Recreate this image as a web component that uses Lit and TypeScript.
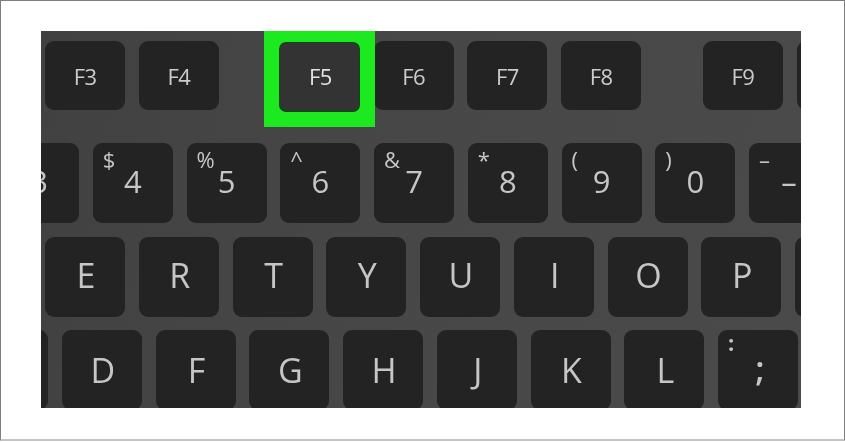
import { LitElement, html, css } from "lit";
import { customElement } from "lit/decorators.js";

type K = { t?: string; s?: string; cls?: string };

const fnRow: K[] = [
  { t: "F3" }, { t: "F4" }, { t: "F5", cls: "hl" }, { t: "F6" }, { t: "F7" }, { t: "F8" }, { t: "F9", cls: "far" }, { t: "" },
];
const numRow: K[] = [
  { t: "3" }, { t: "4", s: "$" }, { t: "5", s: "%" }, { t: "6", s: "^" }, { t: "7", s: "&" },
  { t: "8", s: "*" }, { t: "9", s: "(" }, { t: "0", s: ")" }, { t: "–", s: "–" },
];
const qRow: K[] = ["E", "R", "T", "Y", "U", "I", "O", "P", ""].map((t) => ({ t }));
const aRow: K[] = [
  ...["", "D", "F", "G", "H", "J", "K", "L"].map((t) => ({ t })),
  { t: ";", s: ":", cls: "semi" },
];

@customElement("app-root")
export class AppRoot extends LitElement {
  static styles = css`
    :host {
      display: block;
      width: 845px;
      height: 442px;
      box-sizing: border-box;
      background: #fff;
      padding: 0 0 1px 0;
    }
    .frame {
      height: 100%;
      box-sizing: border-box;
      border-top: 1px solid #7d7d7d;
      border-left: 1px solid #7d7d7d;
      border-right: 1px solid #7d7d7d;
      border-bottom: 2px solid #c4c4c4;
      padding: 30px 43.5px 0 40px;
    }
    .board {
      height: 377px;
      overflow: hidden;
      background: linear-gradient(100deg, #414141 0%, #474747 45%, #4a4a4a 100%);
      font-family: "Open Sans", "Noto Sans", sans-serif;
      font-weight: 400;
      color: #c6c6c6;
      display: flex;
      flex-direction: column;
    }
    .row {
      display: flex;
      gap: 13.75px;
      flex: none;
    }
    .r1 { height: 69px; margin: 10px 0 0 4px; }
    .r2 { height: 80px; margin: 33px 0 0 -42px; }
    .r3 { height: 80px; margin: 14px 0 0 4px; }
    .r4 { height: 80px; margin: 13px 0 0 -73px; }
    .key {
      flex: none;
      box-sizing: border-box;
      width: 80px;
      height: 100%;
      border-radius: 9px;
      background: #232323;
      display: grid;
      place-items: center;
    }
    .key > span { grid-area: 1 / 1; }
    .main {
      font-size: 34px;
      line-height: 1;
      filter: blur(0.5px);
    }
    .r1 .main {
      font-size: 22px;
      font-weight: 400;
      letter-spacing: -0.8px;
      color: #cccccc;
      margin-top: 1px;
    }
    .r2 .main { font-size: 31px; margin: -3px 0 0 0; }
    .r3 .main { margin: -5px 0 0 2px; }
    .r4 .main { margin: -1px 0 0 2px; }
    .sym {
      justify-self: start;
      align-self: start;
      font-size: 22px;
      line-height: 1;
      margin: 5px 0 0 10px;
      filter: blur(0.5px);
    }
    .semi .main { font-weight: 600; margin: -4px 0 0 4px; }
    .semi .sym { font-weight: 700; margin: 1px 0 0 10px; }
    .far { margin-left: 48px; }
    .mark {
      flex: none;
      position: relative;
      box-sizing: border-box;
      width: 111px;
      height: 100px;
      margin: -14px -15.5px 0 31.75px;
      border: 16px solid #1de921;
      background: #1de921;
    }
    .hl {
      background: #333;
      height: 68px;
      width: 79px;
      border-radius: 6px;
      box-shadow: 0 0 0 1px #0c4a10;
    }
    .r1 .hl .main {
      margin: -3px 0 0 1px;
      color: #e2e2e2;
    }
  `;

  private key(k: K) {
    const cap = html`<div class="key ${k.cls ?? ""}">
      ${k.s ? html`<span class="sym">${k.s}</span>` : ""}
      <span class="main">${k.t}</span>
    </div>`;
    return k.cls === "hl" ? html`<div class="mark">${cap}</div>` : cap;
  }

  render() {
    return html`<div class="frame">
      <div class="board">
        <div class="row r1">${fnRow.map((k) => this.key(k))}</div>
        <div class="row r2">${numRow.map((k) => this.key(k))}</div>
        <div class="row r3">${qRow.map((k) => this.key(k))}</div>
        <div class="row r4">${aRow.map((k) => this.key(k))}</div>
      </div>
    </div>`;
  }
}
